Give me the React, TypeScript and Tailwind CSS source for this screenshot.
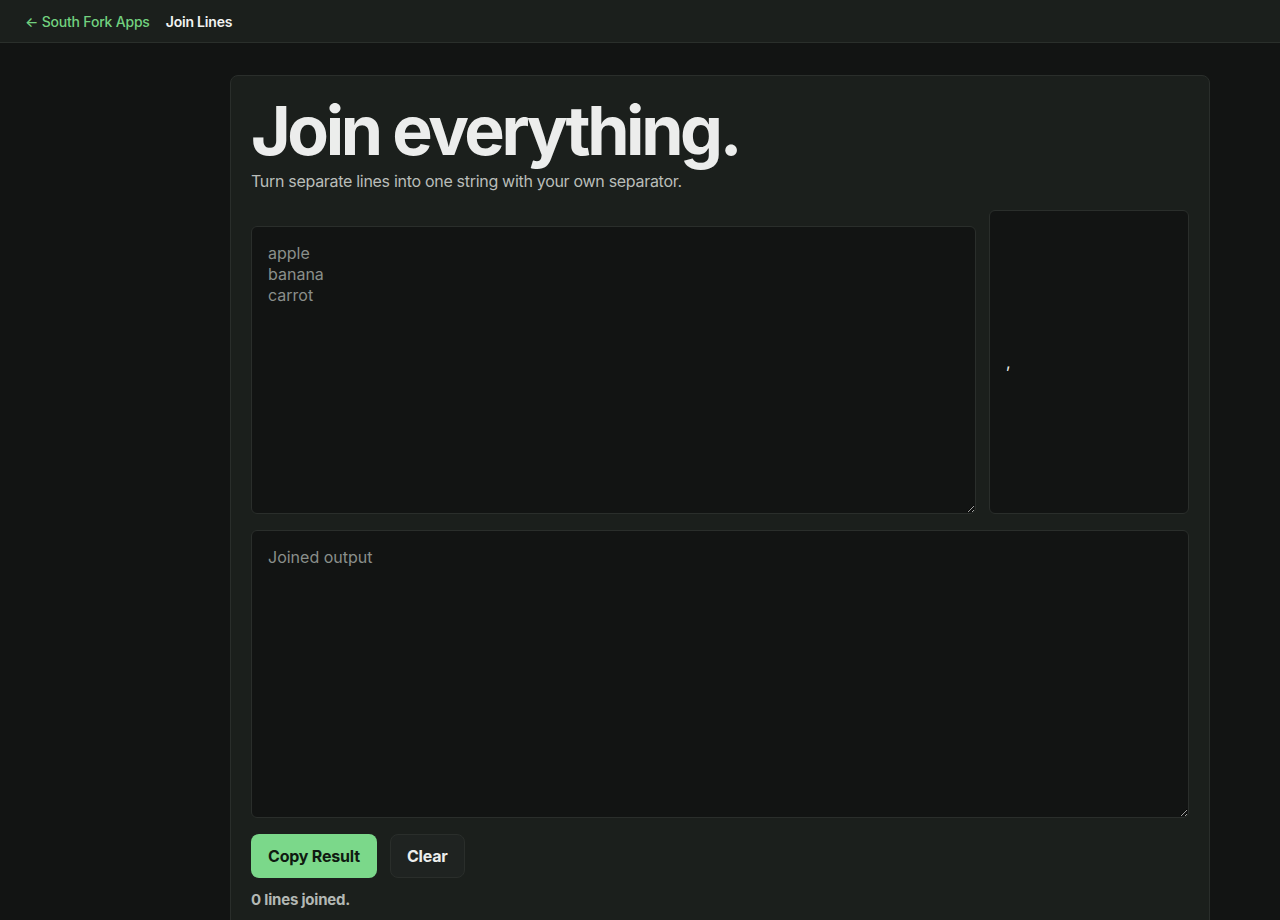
import React, { useState } from "react";

const font = { fontFamily: "Inter, 'Noto Sans', sans-serif" };

export default function App() {
  const [input, setInput] = useState("");
  const [sep, setSep] = useState(",");
  const lines = input.split("\n").filter((l) => l.trim() !== "");
  const output = lines.join(sep);

  return (
    <div className="min-h-screen bg-[#121413] text-[#e8eae8]" style={font}>
      {/* top bar */}
      <header className="h-[43px] bg-[#1b1f1c] border-b border-[#2a2f2b] flex items-center px-[25px] gap-4">
        <a className="text-[14px] font-medium text-[#72d17f] tracking-[-0.2px]">← South Fork Apps</a>
        <span className="text-[14px] font-semibold text-[#f2f4f2] tracking-[-0.2px]">Join Lines</span>
      </header>

      <main className="pt-8 pl-[230px]">
        <section className="w-[980px] bg-[#1b1f1c] border border-[#2a2e2b] rounded-lg px-5 pt-[18px] pb-6">
          <h1 className="text-[68px] leading-[72px] font-bold tracking-[-3.4px] text-[#ecedec]">
            Join everything.
          </h1>
          <p className="mt-[3px] text-[16px] text-[#b9bdb9] tracking-[-0.3px]">
            Turn separate lines into one string with your own separator.
          </p>

          <div className="mt-[17px] flex items-end gap-[13px]">
            <textarea
              value={input}
              onChange={(e) => setInput(e.target.value)}
              placeholder={"apple\nbanana\ncarrot"}
              className="flex-1 h-[288px] bg-[#121413] border border-[#2a2e2b] rounded-md px-4 py-[16px] text-[16px] leading-[21px] text-[#e8eae8] placeholder:text-[#8a8f8b] outline-none"
            />
            <input
              value={sep}
              onChange={(e) => setSep(e.target.value)}
              className="w-[200px] h-[304px] bg-[#121413] border border-[#2a2e2b] rounded-md px-4 text-[16px] text-[#f2f4f2] outline-none"
            />
          </div>

          <textarea
            readOnly
            value={output}
            placeholder="Joined output"
            className="mt-4 block w-full h-[288px] bg-[#121413] border border-[#2a2e2b] rounded-md px-4 py-[16px] text-[16px] leading-[21px] text-[#e8eae8] placeholder:text-[#8a8f8b] outline-none"
          />

          <div className="mt-4 flex gap-[13px]">
            <button className="h-[44px] px-[17px] rounded-lg bg-[#7bd88a] text-[#0f1a11] text-[16px] font-bold tracking-[-0.2px]">
              Copy Result
            </button>
            <button
              onClick={() => setInput("")}
              className="h-[44px] px-4 rounded-lg bg-[#1f2321] border border-[#2a2e2b] text-[#eceeec] text-[16px] font-bold tracking-[-0.2px]"
            >
              Clear
            </button>
          </div>

          <p className="mt-[11px] text-[15px] font-bold text-[#b3b8b4] tracking-[-0.2px]">
            {lines.length} lines joined.
          </p>
        </section>
      </main>
    </div>
  );
}
